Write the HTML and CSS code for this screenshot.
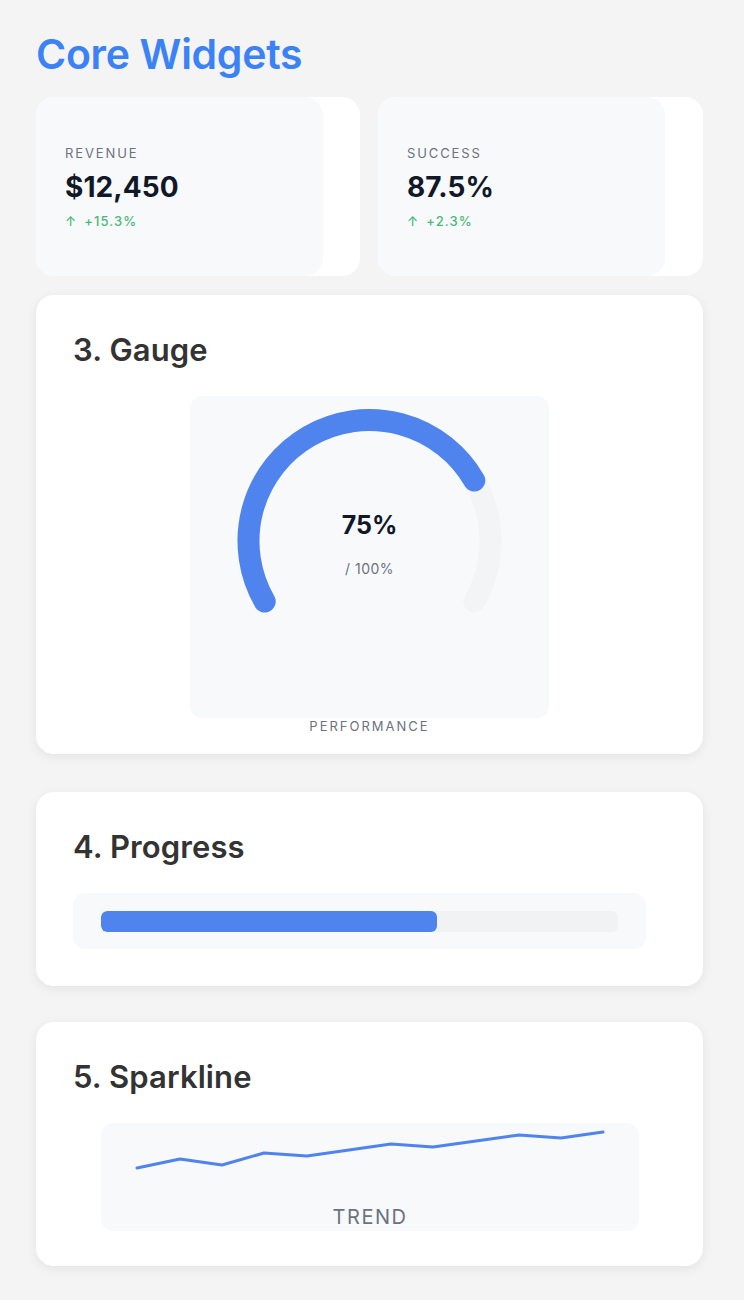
FILE: index.html
```html
<!DOCTYPE html>
<html lang="en">
<head>
<meta charset="utf-8">
<title>Core Widgets</title>
<link rel="stylesheet" href="styles.css">
</head>
<body>
<main class="page">
  <h1 class="page-title">Core Widgets</h1>

  <section class="stats">
    <div class="stat-card">
      <div class="stat-inner">
        <div class="stat-label">REVENUE</div>
        <div class="stat-value">$12,450</div>
        <div class="stat-change"><span class="arrow">↑</span>+15.3%</div>
      </div>
    </div>
    <div class="stat-card">
      <div class="stat-inner">
        <div class="stat-label">SUCCESS</div>
        <div class="stat-value">87.5%</div>
        <div class="stat-change"><span class="arrow">↑</span>+2.3%</div>
      </div>
    </div>
  </section>

  <section class="card card-gauge">
    <h2 class="card-title">3. Gauge</h2>
    <div class="gauge-box">
      <svg class="gauge-svg" width="359" height="322" viewBox="0 0 359 322">
        <path d="M 74.7 205.5 A 121 121 0 1 1 284.3 205.5" fill="none" stroke="#f3f4f6" stroke-width="22" stroke-linecap="round"/>
        <path d="M 74.7 205.5 A 121 121 0 0 1 284.3 84.5" fill="none" stroke="#4f83ee" stroke-width="22" stroke-linecap="round"/>
        <text x="179.5" y="138" text-anchor="middle" class="gauge-value">75%</text>
        <text x="179.5" y="178" text-anchor="middle" class="gauge-sub">/ 100%</text>
      </svg>
    </div>
    <div class="gauge-label">PERFORMANCE</div>
  </section>

  <section class="card card-progress">
    <h2 class="card-title">4. Progress</h2>
    <div class="progress-box">
      <div class="progress-track">
        <div class="progress-fill" style="width: 65%"></div>
      </div>
    </div>
  </section>

  <section class="card card-spark">
    <h2 class="card-title">5. Sparkline</h2>
    <div class="spark-box">
      <svg class="spark-svg" width="538" height="108" viewBox="0 0 538 108">
        <polyline points="36,45 79,36 121,42 163,30 206,33 248,27 290,21 332,24 375,18 418,12 460,15 502,9" fill="none" stroke="#4f83ee" stroke-width="3" stroke-linecap="round" stroke-linejoin="round"/>
        <text x="269" y="101" text-anchor="middle" class="spark-label">TREND</text>
      </svg>
    </div>
  </section>
</main>
</body>
</html>
```

FILE: styles.css
```css
* { box-sizing: border-box; }

html, body {
  margin: 0;
  padding: 0;
  background: #f4f4f5;
  font-family: "Inter", "Noto Sans", "Liberation Sans", sans-serif;
}

.page {
  width: 744px;
  padding: 29px 41px 40px 36px;
}

.page-title {
  margin: 0 0 18px;
  font-size: 41px;
  line-height: 50px;
  font-weight: 600;
  color: #3b82f6;
  letter-spacing: -0.3px;
}

.stats {
  display: grid;
  grid-template-columns: 324px 325px;
  gap: 18px;
  margin-bottom: 19px;
}

.stat-card {
  background: #ffffff;
  border-radius: 18px;
  height: 179px;
  display: flex;
}

.stat-inner {
  width: 287px;
  height: 100%;
  background: #f8f9fb;
  border-radius: 18px;
  padding: 0 29px;
  display: flex;
  flex-direction: column;
  justify-content: center;
}

.stat-label {
  font-size: 13px;
  line-height: 16px;
  letter-spacing: 1.9px;
  color: #6b7280;
  margin-bottom: 10px;
}

.stat-value {
  font-size: 28px;
  line-height: 32px;
  font-weight: 700;
  letter-spacing: 0.1px;
  color: #111827;
  margin-bottom: 10px;
}

.stat-change {
  font-size: 13px;
  line-height: 16px;
  font-weight: 500;
  letter-spacing: 1.1px;
  color: #48bb78;
}

.arrow {
  display: inline-block;
  margin-right: 7px;
}

.card {
  background: #ffffff;
  border-radius: 18px;
  padding: 37px;
  box-shadow: 0 3px 12px rgba(0, 0, 0, 0.07);
}

.card-gauge {
  padding-bottom: 20px;
  margin-bottom: 38px;
}

.card-progress {
  margin-bottom: 36px;
}

.card-spark {
  padding-bottom: 35px;
}

.card-title {
  margin: 0 0 28px;
  font-size: 31px;
  line-height: 36px;
  font-weight: 600;
  color: #333333;
  letter-spacing: 0.1px;
}

.gauge-box {
  width: 359px;
  height: 322px;
  margin: 0 auto;
  background: #f8f9fb;
  border-radius: 12px;
}

.gauge-svg { display: block; }

.gauge-value {
  font-family: "Inter", "Noto Sans", sans-serif;
  font-size: 25px;
  font-weight: 700;
  fill: #111827;
}

.gauge-sub {
  font-family: "Inter", "Noto Sans", sans-serif;
  font-size: 14px;
  letter-spacing: 0.5px;
  fill: #6b7280;
}

.gauge-label {
  text-align: center;
  font-size: 13px;
  line-height: 16px;
  letter-spacing: 2px;
  color: #6b7280;
}

.progress-box {
  width: 573px;
  height: 56px;
  background: #f8f9fb;
  border-radius: 12px;
  padding: 18px 28px 17px;
}

.progress-track {
  height: 21px;
  background: #f1f2f4;
  border-radius: 6px;
  overflow: hidden;
}

.progress-fill {
  height: 100%;
  background: #4f83ee;
  border-radius: 6px;
}

.spark-box {
  width: 538px;
  height: 108px;
  margin: 0 auto;
  background: #f8f9fb;
  border-radius: 12px;
}

.spark-svg { display: block; }

.spark-label {
  font-family: "Inter", "Noto Sans", sans-serif;
  font-size: 20px;
  letter-spacing: 1.5px;
  fill: #6b7280;
}
```
